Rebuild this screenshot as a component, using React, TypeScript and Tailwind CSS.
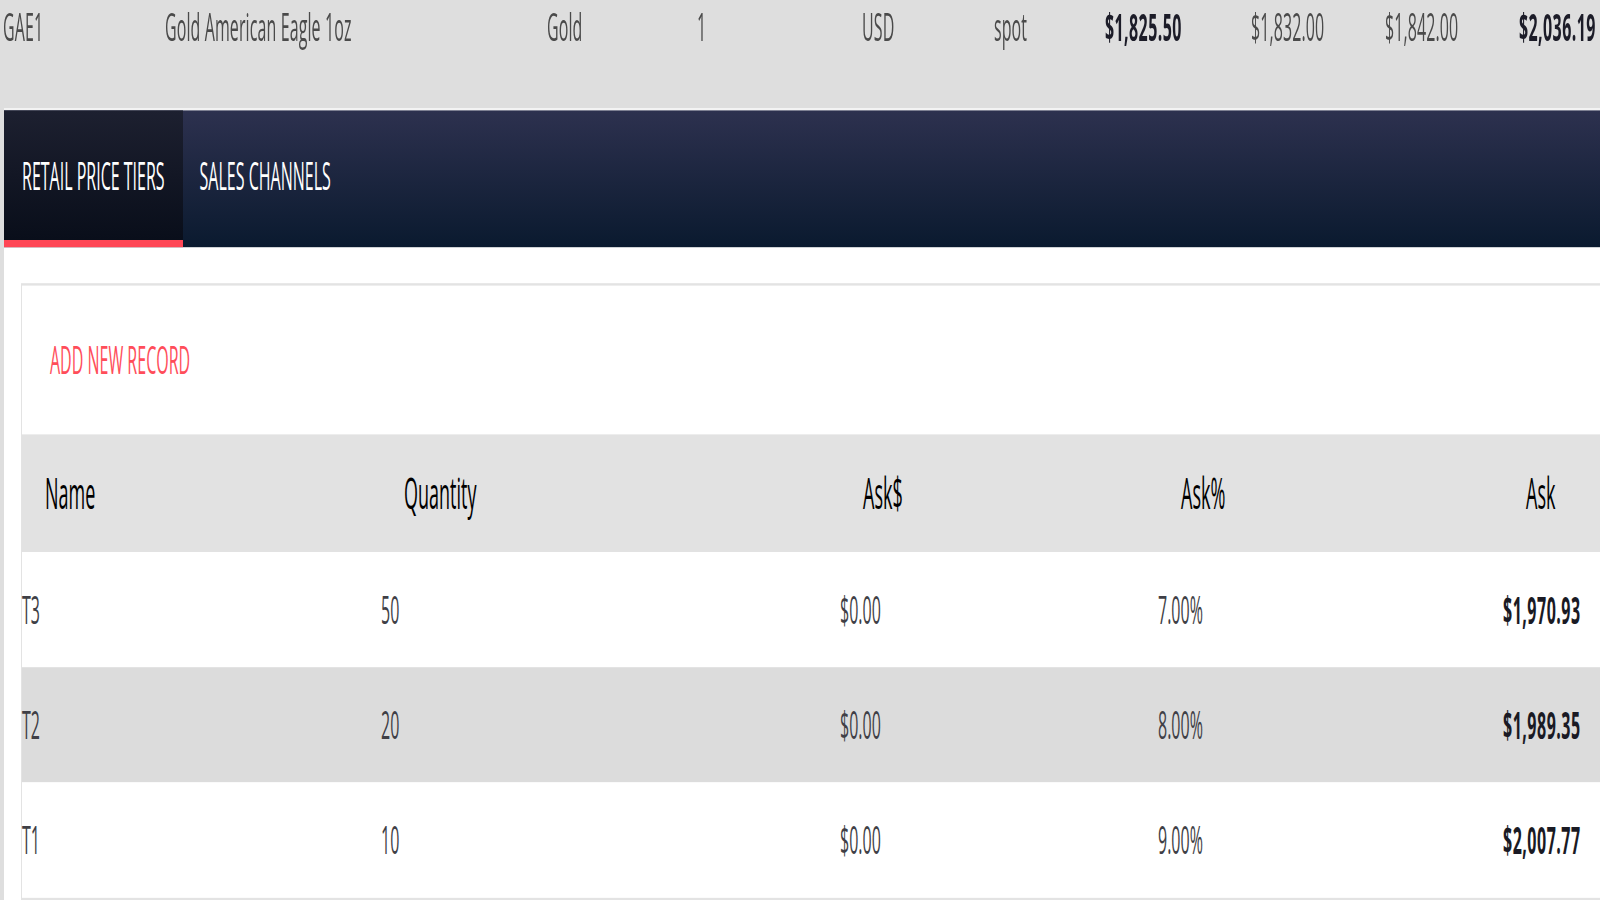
const summary = [
  { text: "GAE1", bold: false },
  { text: "Gold American Eagle 1oz", bold: false },
  { text: "Gold", bold: false },
  { text: "1", bold: false },
  { text: "USD", bold: false },
  { text: "spot", bold: false },
  { text: "$1,825.50", bold: true },
  { text: "$1,832.00", bold: false },
  { text: "$1,842.00", bold: false },
  { text: "$2,036.19", bold: true },
]

const tiers = [
  { name: "T3", quantity: "50", askDollar: "$0.00", askPercent: "7.00%", ask: "$1,970.93" },
  { name: "T2", quantity: "20", askDollar: "$0.00", askPercent: "8.00%", ask: "$1,989.35" },
  { name: "T1", quantity: "10", askDollar: "$0.00", askPercent: "9.00%", ask: "$2,007.77" },
]

export default function App() {
  return (
    <div className="w-[1600px] h-[900px] overflow-hidden bg-[#dedede] font-['Open_Sans',sans-serif] antialiased">
      {/* page is laid out at natural height then stretched vertically like the capture */}
      <div className="w-[1600px] h-[375px] origin-top-left scale-y-[2.4] flex flex-col">
        {/* Master row */}
        <div className="h-[44.5px] shrink-0 grid grid-cols-[162px_382px_150px_165px_132px_111px_146px_134px_134px_1fr] pl-[3px] pt-[0.6px] text-[16px] leading-[20px] text-[#4a4a4a]">
          {summary.map((cell, i) => (
            <div key={i} className={cell.bold ? "font-bold tracking-[0.4px] text-[#1c1c28]" : "tracking-[0.1px]"}>
              {cell.text}
            </div>
          ))}
        </div>

        {/* Detail */}
        <div className="ml-[4px] flex-1 bg-white border-t border-[#f3f3f3] overflow-hidden flex flex-col">
          {/* Tabs */}
          <div className="h-[57.4px] shrink-0 flex bg-linear-to-b from-[#2d314f] to-[#0a1a2f] text-[16px] leading-[20px] text-white">
            <div className="px-[18px] pt-[17.6px] bg-linear-to-b from-[#1d2030] to-[#090e1a] border-b-[3px] border-[#ff4655]">
              RETAIL PRICE TIERS
            </div>
            <div className="px-[17px] pt-[17.6px]">SALES CHANNELS</div>
          </div>

          {/* Grid card */}
          <div className="pl-[17px] pt-[15.3px]">
            <div className="w-[1800px] border border-[#e3e3e3] bg-white">
              <div className="h-[61.4px] pl-[28px] pt-[21px] text-[16px] leading-[20px] text-[#ff4d5a]">
                ADD NEW RECORD
              </div>

              <div className="h-[49.5px] grid grid-cols-[359px_459px_318px_345px_1fr] items-center bg-[#e2e2e2] text-[18px] leading-[24px] text-black">
                <div className="pl-[23px]">Name</div>
                <div className="pl-[23px]">Quantity</div>
                <div className="pl-[23px]">Ask$</div>
                <div className="pl-[23px]">Ask%</div>
                <div className="pl-[23px]">Ask</div>
              </div>

              {tiers.map((tier, i) => (
                <div
                  key={tier.name}
                  className={`h-[48px] grid grid-cols-[359px_459px_318px_345px_1fr] items-center text-[16px] leading-[20px] text-[#3f3f46] ${
                    i % 2 === 1 ? "bg-[#dcdcdc]" : "bg-white"
                  }`}
                >
                  <div>{tier.name}</div>
                  <div>{tier.quantity}</div>
                  <div>{tier.askDollar}</div>
                  <div>{tier.askPercent}</div>
                  <div className="font-bold tracking-[0.5px] text-[#1a1a24]">{tier.ask}</div>
                </div>
              ))}
            </div>
          </div>
        </div>
      </div>
    </div>
  )
}
